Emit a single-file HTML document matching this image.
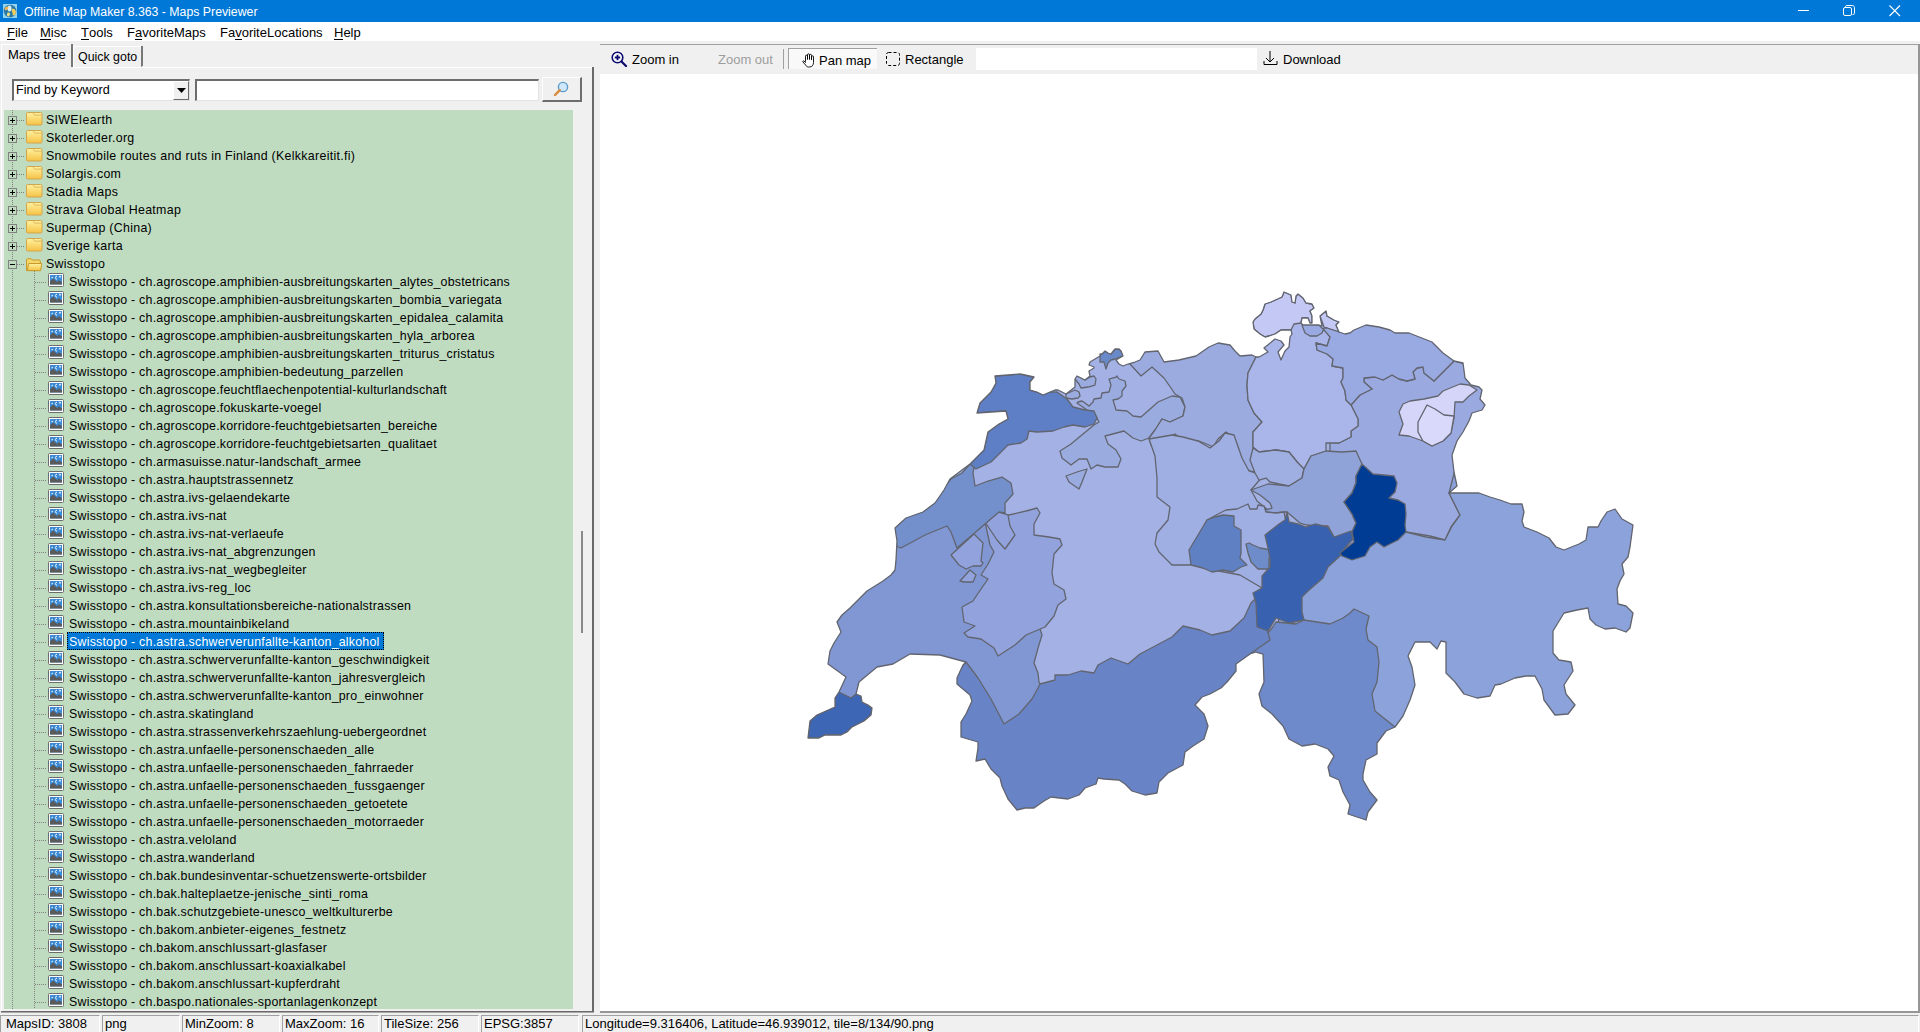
<!DOCTYPE html>
<html><head><meta charset="utf-8">
<style>
*{box-sizing:border-box;margin:0;padding:0}
html,body{width:1920px;height:1032px;overflow:hidden;background:#f0f0f0;font-family:"Liberation Sans",sans-serif;color:#000}
.a{position:absolute}
#title{left:0;top:0;width:1920px;height:22px;background:#0078d7}
#title .tx{left:24px;top:4px;font-size:12.3px;color:#fff;white-space:nowrap;line-height:16px}
#menu{left:0;top:22px;width:1920px;height:19px;background:#fff}
#menu span{position:absolute;top:3px;font-size:13px;line-height:16px;white-space:nowrap}
#menu u{text-decoration:none;border-bottom:1px solid #000;display:inline-block;line-height:12px}
.tab{position:absolute;font-size:13px;white-space:nowrap}
#tree{left:4px;top:110px;width:569px;height:899px;background:#c0dcc0;overflow:hidden}
.row{position:absolute;left:0;width:568px;height:18px}
.row .t{position:absolute;top:2px;font-size:12.4px;letter-spacing:0.3px;line-height:16px;white-space:nowrap;padding:0 2px 0 3px;height:18px}
.row .t.sel{background:#0078d7;color:#fff;outline:1px dotted #000;outline-offset:-1px;top:0;padding-top:2px;padding-right:4px}
.row .t.it{letter-spacing:0.22px;padding-left:2px}
.hd{position:absolute;top:10px;height:1px;background-image:linear-gradient(90deg,#808080 50%,transparent 50%);background-size:2px 1px}
.fi{position:absolute;left:22px;top:2px}
.mi{position:absolute;left:44px;top:1px}
.pb{position:absolute;left:4px;width:9px;height:9px;border:1px solid #808080;background:#c0dcc0;z-index:2}
.pb .h{position:absolute;left:1px;top:3px;width:5px;height:1px;background:#000}
.pb .v{position:absolute;left:3px;top:1px;width:1px;height:5px;background:#000}
.vd{position:absolute;width:1px;background-image:linear-gradient(180deg,#808080 50%,transparent 50%);background-size:1px 2px}
.tb{position:absolute;top:52px;font-size:13px;line-height:16px;white-space:nowrap}
.sp{position:absolute;top:1015px;height:17px;border-top:1px solid #a0a0a0;border-left:1px solid #a0a0a0;border-right:1px solid #fff;font-size:13px;line-height:16px;padding-left:5px;white-space:nowrap}
</style></head><body>
<div id="title" class="a">
  <svg class="a" style="left:3px;top:4px" width="14" height="14" viewBox="0 0 14 14"><rect width="14" height="14" fill="#93d3ee"/><circle cx="7" cy="7" r="6.3" fill="#2c7aa6"/><ellipse cx="6.5" cy="4.5" rx="2" ry="3" fill="#d8f0f2"/><path d="M1.5 5c.8-2 2.3-2.8 3.5-2.2.9.6.3 2.3-.9 3-1 .5-1.7 1-2.6-.8z" fill="#f0b45a"/><path d="M4 10c.5-1.6 2-1.8 2.8-.8.7 1-.2 2.8-1.3 3.3-1 .3-1.8-.9-1.5-2.5z" fill="#e9e08a"/><path d="M9 5c1.5-.8 3.5.2 3.8 2.2.3 2-.8 3.8-1.8 4.2-1 .3-1.5-1.2-1.5-2.5 0-1.3-1.6-2.9-.5-3.9z" fill="#f5cf5c"/></svg>
  <div class="a tx">Offline Map Maker 8.363 - Maps Previewer</div>
  <svg class="a" style="left:1798px;top:10px" width="11" height="1"><rect width="11" height="1" fill="#fff"/></svg>
  <svg class="a" style="left:1843px;top:5px" width="12" height="12" viewBox="0 0 12 12"><rect x="0.5" y="2.5" width="8" height="8" rx="1.5" fill="none" stroke="#fff"/><path d="M2.5 2.5V1.8c0-.8.5-1.3 1.3-1.3h5.5c1.2 0 2.2 1 2.2 2.2v5.5c0 .8-.5 1.3-1.3 1.3H9.5" fill="none" stroke="#fff"/></svg>
  <svg class="a" style="left:1889px;top:5px" width="12" height="12" viewBox="0 0 12 12"><path d="M0.5 0.5L11 11M11 0.5L0.5 11" stroke="#fff" stroke-width="1.1"/></svg>
</div>
<div id="menu" class="a">
  <span style="left:7px"><u>F</u>ile</span>
  <span style="left:40px"><u>M</u>isc</span>
  <span style="left:81px"><u>T</u>ools</span>
  <span style="left:127px">F<u>a</u>voriteMaps</span>
  <span style="left:220px">Fa<u>v</u>oriteLocations</span>
  <span style="left:334px"><u>H</u>elp</span>
</div>

<!-- tabs -->
<div class="a" style="left:73px;top:46px;width:69px;height:21px;border-left:1px solid #fff;border-top:1px solid #fff;border-right:1px solid #a0a0a0;"></div>
<div class="a" style="left:141px;top:46px;width:2px;height:20px;background:#777"></div>
<div class="tab" style="left:78px;top:50px;font-size:12.4px">Quick goto</div>
<div class="a" style="left:1px;top:44px;width:72px;height:24px;background:#f0f0f0;border-left:1px solid #fff;border-top:1px solid #fff;"></div>
<div class="a" style="left:71px;top:44px;width:2px;height:23px;background:#777"></div>
<div class="tab" style="left:8px;top:47px">Maps tree</div>
<!-- panel borders -->
<div class="a" style="left:1px;top:67px;width:1px;height:946px;background:#fff"></div>
<div class="a" style="left:73px;top:67px;width:521px;height:1px;background:#fff"></div>
<div class="a" style="left:592px;top:67px;width:2px;height:946px;background:#696969"></div>
<div class="a" style="left:1px;top:1011px;width:593px;height:1px;background:#6a6a6a"></div><div class="a" style="left:1px;top:1012px;width:593px;height:1px;background:#a8a8a8"></div>

<!-- combo -->
<div class="a" style="left:12px;top:79px;width:178px;height:22px;background:#fff;border-top:2px solid #6d6d6d;border-left:2px solid #6d6d6d;border-right:1px solid #e3e3e3;border-bottom:1px solid #e3e3e3"></div>
<div class="a" style="left:16px;top:82px;font-size:12.6px;line-height:16px;white-space:nowrap">Find by Keyword</div>
<div class="a" style="left:173px;top:81px;width:16px;height:19px;background:#f0f0f0;border-left:1px solid #fff;border-top:1px solid #fff;border-right:1px solid #696969;border-bottom:1px solid #696969"></div>
<svg class="a" style="left:177px;top:88px" width="9" height="5"><path d="M0 0h9L4.5 5z" fill="#000"/></svg>
<!-- text input -->
<div class="a" style="left:195px;top:79px;width:344px;height:22px;background:#fff;border-top:2px solid #6d6d6d;border-left:2px solid #6d6d6d;border-right:1px solid #e3e3e3;border-bottom:1px solid #e3e3e3"></div>
<!-- search button -->
<div class="a" style="left:542px;top:77px;width:40px;height:25px;background:#f0f0f0;border-left:1px solid #fff;border-top:1px solid #fff;border-right:2px solid #6d6d6d;border-bottom:2px solid #6d6d6d"></div>
<svg class="a" style="left:553px;top:81px" width="16" height="16" viewBox="0 0 16 16"><circle cx="10" cy="6" r="4.6" fill="#cfe8fb" stroke="#5a9ccc" stroke-width="1.4"/><path d="M6.8 9.2L2 14" stroke="#d98a3a" stroke-width="2.4" stroke-linecap="round"/></svg>

<svg width="0" height="0" style="position:absolute"><defs><linearGradient id="fgr" x1="0" y1="0" x2="0" y2="1"><stop offset="0" stop-color="#fff2a0"/><stop offset="1" stop-color="#f6c245"/></linearGradient></defs></svg>
<div id="tree" class="a">
<div class="vd" style="left:8px;top:0;height:899px"></div>
<div class="vd" style="left:30px;top:161px;height:739px"></div>
<div class="row" style="top:0px"><div class="hd" style="left:13px;width:8px"></div><svg class="fi" width="17" height="14" viewBox="0 0 17 14"><rect x="0.5" y="0.5" width="15.5" height="12.5" rx="1.2" fill="url(#fgr)" stroke="#d3a64e"/><path d="M7.2 0.8l1.3 2.3h7.3" fill="none" stroke="#d9b25a" stroke-width="0.9"/></svg><span class="t" style="left:39px">SIWEIearth</span></div>
<div class="pb" style="top:6px"><i class="h"></i><i class="v"></i></div>
<div class="row" style="top:18px"><div class="hd" style="left:13px;width:8px"></div><svg class="fi" width="17" height="14" viewBox="0 0 17 14"><rect x="0.5" y="0.5" width="15.5" height="12.5" rx="1.2" fill="url(#fgr)" stroke="#d3a64e"/><path d="M7.2 0.8l1.3 2.3h7.3" fill="none" stroke="#d9b25a" stroke-width="0.9"/></svg><span class="t" style="left:39px">Skoterleder.org</span></div>
<div class="pb" style="top:24px"><i class="h"></i><i class="v"></i></div>
<div class="row" style="top:36px"><div class="hd" style="left:13px;width:8px"></div><svg class="fi" width="17" height="14" viewBox="0 0 17 14"><rect x="0.5" y="0.5" width="15.5" height="12.5" rx="1.2" fill="url(#fgr)" stroke="#d3a64e"/><path d="M7.2 0.8l1.3 2.3h7.3" fill="none" stroke="#d9b25a" stroke-width="0.9"/></svg><span class="t" style="left:39px">Snowmobile routes and ruts in Finland (Kelkkareitit.fi)</span></div>
<div class="pb" style="top:42px"><i class="h"></i><i class="v"></i></div>
<div class="row" style="top:54px"><div class="hd" style="left:13px;width:8px"></div><svg class="fi" width="17" height="14" viewBox="0 0 17 14"><rect x="0.5" y="0.5" width="15.5" height="12.5" rx="1.2" fill="url(#fgr)" stroke="#d3a64e"/><path d="M7.2 0.8l1.3 2.3h7.3" fill="none" stroke="#d9b25a" stroke-width="0.9"/></svg><span class="t" style="left:39px">Solargis.com</span></div>
<div class="pb" style="top:60px"><i class="h"></i><i class="v"></i></div>
<div class="row" style="top:72px"><div class="hd" style="left:13px;width:8px"></div><svg class="fi" width="17" height="14" viewBox="0 0 17 14"><rect x="0.5" y="0.5" width="15.5" height="12.5" rx="1.2" fill="url(#fgr)" stroke="#d3a64e"/><path d="M7.2 0.8l1.3 2.3h7.3" fill="none" stroke="#d9b25a" stroke-width="0.9"/></svg><span class="t" style="left:39px">Stadia Maps</span></div>
<div class="pb" style="top:78px"><i class="h"></i><i class="v"></i></div>
<div class="row" style="top:90px"><div class="hd" style="left:13px;width:8px"></div><svg class="fi" width="17" height="14" viewBox="0 0 17 14"><rect x="0.5" y="0.5" width="15.5" height="12.5" rx="1.2" fill="url(#fgr)" stroke="#d3a64e"/><path d="M7.2 0.8l1.3 2.3h7.3" fill="none" stroke="#d9b25a" stroke-width="0.9"/></svg><span class="t" style="left:39px">Strava Global Heatmap</span></div>
<div class="pb" style="top:96px"><i class="h"></i><i class="v"></i></div>
<div class="row" style="top:108px"><div class="hd" style="left:13px;width:8px"></div><svg class="fi" width="17" height="14" viewBox="0 0 17 14"><rect x="0.5" y="0.5" width="15.5" height="12.5" rx="1.2" fill="url(#fgr)" stroke="#d3a64e"/><path d="M7.2 0.8l1.3 2.3h7.3" fill="none" stroke="#d9b25a" stroke-width="0.9"/></svg><span class="t" style="left:39px">Supermap (China)</span></div>
<div class="pb" style="top:114px"><i class="h"></i><i class="v"></i></div>
<div class="row" style="top:126px"><div class="hd" style="left:13px;width:8px"></div><svg class="fi" width="17" height="14" viewBox="0 0 17 14"><rect x="0.5" y="0.5" width="15.5" height="12.5" rx="1.2" fill="url(#fgr)" stroke="#d3a64e"/><path d="M7.2 0.8l1.3 2.3h7.3" fill="none" stroke="#d9b25a" stroke-width="0.9"/></svg><span class="t" style="left:39px">Sverige karta</span></div>
<div class="pb" style="top:132px"><i class="h"></i><i class="v"></i></div>
<div class="row" style="top:144px"><div class="hd" style="left:13px;width:8px"></div><svg class="fi" style="top:4px" width="17" height="14" viewBox="0 0 17 14"><path d="M0.5 12.5V2c0-.8.4-1.2 1.2-1.2h3.5l1 1.2h7c.7 0 1.1.4 1.1 1.1V12.5z" fill="#f7d768" stroke="#c69a2c"/><path d="M2.6 5.5h13.2l-1.2 7.2H1.3z" fill="url(#fgr)" stroke="#c69a2c"/></svg><span class="t" style="left:39px">Swisstopo</span></div>
<div class="pb" style="top:150px"><i class="h"></i></div>
<div class="row" style="top:162px"><div class="hd" style="left:31px;width:12px"></div><svg class="mi" width="16" height="14" viewBox="0 0 16 14"><rect x="0.5" y="0.5" width="15" height="13" rx="1" fill="#fff" stroke="#6c6c6c"/><rect x="2" y="2" width="12" height="9.5" fill="#3d8ad4"/><path d="M2 11.5V8.2l3.2-2.7 3.8 3.4 2-1.6 3 2.2v2z" fill="#5a5a5a"/><circle cx="4.2" cy="4.6" r="0.8" fill="#cfe8ff"/><path d="M9 3.2a1.5 1.5 0 1 0 0 3" stroke="#e8f4ff" fill="none" stroke-width="1"/><path d="M12 2.6v2.2M10.9 3.7h2.2" stroke="#e8f4ff" stroke-width="0.8"/></svg><span class="t it" style="left:63px">Swisstopo - ch.agroscope.amphibien-ausbreitungskarten_alytes_obstetricans</span></div>
<div class="row" style="top:180px"><div class="hd" style="left:31px;width:12px"></div><svg class="mi" width="16" height="14" viewBox="0 0 16 14"><rect x="0.5" y="0.5" width="15" height="13" rx="1" fill="#fff" stroke="#6c6c6c"/><rect x="2" y="2" width="12" height="9.5" fill="#3d8ad4"/><path d="M2 11.5V8.2l3.2-2.7 3.8 3.4 2-1.6 3 2.2v2z" fill="#5a5a5a"/><circle cx="4.2" cy="4.6" r="0.8" fill="#cfe8ff"/><path d="M9 3.2a1.5 1.5 0 1 0 0 3" stroke="#e8f4ff" fill="none" stroke-width="1"/><path d="M12 2.6v2.2M10.9 3.7h2.2" stroke="#e8f4ff" stroke-width="0.8"/></svg><span class="t it" style="left:63px">Swisstopo - ch.agroscope.amphibien-ausbreitungskarten_bombia_variegata</span></div>
<div class="row" style="top:198px"><div class="hd" style="left:31px;width:12px"></div><svg class="mi" width="16" height="14" viewBox="0 0 16 14"><rect x="0.5" y="0.5" width="15" height="13" rx="1" fill="#fff" stroke="#6c6c6c"/><rect x="2" y="2" width="12" height="9.5" fill="#3d8ad4"/><path d="M2 11.5V8.2l3.2-2.7 3.8 3.4 2-1.6 3 2.2v2z" fill="#5a5a5a"/><circle cx="4.2" cy="4.6" r="0.8" fill="#cfe8ff"/><path d="M9 3.2a1.5 1.5 0 1 0 0 3" stroke="#e8f4ff" fill="none" stroke-width="1"/><path d="M12 2.6v2.2M10.9 3.7h2.2" stroke="#e8f4ff" stroke-width="0.8"/></svg><span class="t it" style="left:63px">Swisstopo - ch.agroscope.amphibien-ausbreitungskarten_epidalea_calamita</span></div>
<div class="row" style="top:216px"><div class="hd" style="left:31px;width:12px"></div><svg class="mi" width="16" height="14" viewBox="0 0 16 14"><rect x="0.5" y="0.5" width="15" height="13" rx="1" fill="#fff" stroke="#6c6c6c"/><rect x="2" y="2" width="12" height="9.5" fill="#3d8ad4"/><path d="M2 11.5V8.2l3.2-2.7 3.8 3.4 2-1.6 3 2.2v2z" fill="#5a5a5a"/><circle cx="4.2" cy="4.6" r="0.8" fill="#cfe8ff"/><path d="M9 3.2a1.5 1.5 0 1 0 0 3" stroke="#e8f4ff" fill="none" stroke-width="1"/><path d="M12 2.6v2.2M10.9 3.7h2.2" stroke="#e8f4ff" stroke-width="0.8"/></svg><span class="t it" style="left:63px">Swisstopo - ch.agroscope.amphibien-ausbreitungskarten_hyla_arborea</span></div>
<div class="row" style="top:234px"><div class="hd" style="left:31px;width:12px"></div><svg class="mi" width="16" height="14" viewBox="0 0 16 14"><rect x="0.5" y="0.5" width="15" height="13" rx="1" fill="#fff" stroke="#6c6c6c"/><rect x="2" y="2" width="12" height="9.5" fill="#3d8ad4"/><path d="M2 11.5V8.2l3.2-2.7 3.8 3.4 2-1.6 3 2.2v2z" fill="#5a5a5a"/><circle cx="4.2" cy="4.6" r="0.8" fill="#cfe8ff"/><path d="M9 3.2a1.5 1.5 0 1 0 0 3" stroke="#e8f4ff" fill="none" stroke-width="1"/><path d="M12 2.6v2.2M10.9 3.7h2.2" stroke="#e8f4ff" stroke-width="0.8"/></svg><span class="t it" style="left:63px">Swisstopo - ch.agroscope.amphibien-ausbreitungskarten_triturus_cristatus</span></div>
<div class="row" style="top:252px"><div class="hd" style="left:31px;width:12px"></div><svg class="mi" width="16" height="14" viewBox="0 0 16 14"><rect x="0.5" y="0.5" width="15" height="13" rx="1" fill="#fff" stroke="#6c6c6c"/><rect x="2" y="2" width="12" height="9.5" fill="#3d8ad4"/><path d="M2 11.5V8.2l3.2-2.7 3.8 3.4 2-1.6 3 2.2v2z" fill="#5a5a5a"/><circle cx="4.2" cy="4.6" r="0.8" fill="#cfe8ff"/><path d="M9 3.2a1.5 1.5 0 1 0 0 3" stroke="#e8f4ff" fill="none" stroke-width="1"/><path d="M12 2.6v2.2M10.9 3.7h2.2" stroke="#e8f4ff" stroke-width="0.8"/></svg><span class="t it" style="left:63px">Swisstopo - ch.agroscope.amphibien-bedeutung_parzellen</span></div>
<div class="row" style="top:270px"><div class="hd" style="left:31px;width:12px"></div><svg class="mi" width="16" height="14" viewBox="0 0 16 14"><rect x="0.5" y="0.5" width="15" height="13" rx="1" fill="#fff" stroke="#6c6c6c"/><rect x="2" y="2" width="12" height="9.5" fill="#3d8ad4"/><path d="M2 11.5V8.2l3.2-2.7 3.8 3.4 2-1.6 3 2.2v2z" fill="#5a5a5a"/><circle cx="4.2" cy="4.6" r="0.8" fill="#cfe8ff"/><path d="M9 3.2a1.5 1.5 0 1 0 0 3" stroke="#e8f4ff" fill="none" stroke-width="1"/><path d="M12 2.6v2.2M10.9 3.7h2.2" stroke="#e8f4ff" stroke-width="0.8"/></svg><span class="t it" style="left:63px">Swisstopo - ch.agroscope.feuchtflaechenpotential-kulturlandschaft</span></div>
<div class="row" style="top:288px"><div class="hd" style="left:31px;width:12px"></div><svg class="mi" width="16" height="14" viewBox="0 0 16 14"><rect x="0.5" y="0.5" width="15" height="13" rx="1" fill="#fff" stroke="#6c6c6c"/><rect x="2" y="2" width="12" height="9.5" fill="#3d8ad4"/><path d="M2 11.5V8.2l3.2-2.7 3.8 3.4 2-1.6 3 2.2v2z" fill="#5a5a5a"/><circle cx="4.2" cy="4.6" r="0.8" fill="#cfe8ff"/><path d="M9 3.2a1.5 1.5 0 1 0 0 3" stroke="#e8f4ff" fill="none" stroke-width="1"/><path d="M12 2.6v2.2M10.9 3.7h2.2" stroke="#e8f4ff" stroke-width="0.8"/></svg><span class="t it" style="left:63px">Swisstopo - ch.agroscope.fokuskarte-voegel</span></div>
<div class="row" style="top:306px"><div class="hd" style="left:31px;width:12px"></div><svg class="mi" width="16" height="14" viewBox="0 0 16 14"><rect x="0.5" y="0.5" width="15" height="13" rx="1" fill="#fff" stroke="#6c6c6c"/><rect x="2" y="2" width="12" height="9.5" fill="#3d8ad4"/><path d="M2 11.5V8.2l3.2-2.7 3.8 3.4 2-1.6 3 2.2v2z" fill="#5a5a5a"/><circle cx="4.2" cy="4.6" r="0.8" fill="#cfe8ff"/><path d="M9 3.2a1.5 1.5 0 1 0 0 3" stroke="#e8f4ff" fill="none" stroke-width="1"/><path d="M12 2.6v2.2M10.9 3.7h2.2" stroke="#e8f4ff" stroke-width="0.8"/></svg><span class="t it" style="left:63px">Swisstopo - ch.agroscope.korridore-feuchtgebietsarten_bereiche</span></div>
<div class="row" style="top:324px"><div class="hd" style="left:31px;width:12px"></div><svg class="mi" width="16" height="14" viewBox="0 0 16 14"><rect x="0.5" y="0.5" width="15" height="13" rx="1" fill="#fff" stroke="#6c6c6c"/><rect x="2" y="2" width="12" height="9.5" fill="#3d8ad4"/><path d="M2 11.5V8.2l3.2-2.7 3.8 3.4 2-1.6 3 2.2v2z" fill="#5a5a5a"/><circle cx="4.2" cy="4.6" r="0.8" fill="#cfe8ff"/><path d="M9 3.2a1.5 1.5 0 1 0 0 3" stroke="#e8f4ff" fill="none" stroke-width="1"/><path d="M12 2.6v2.2M10.9 3.7h2.2" stroke="#e8f4ff" stroke-width="0.8"/></svg><span class="t it" style="left:63px">Swisstopo - ch.agroscope.korridore-feuchtgebietsarten_qualitaet</span></div>
<div class="row" style="top:342px"><div class="hd" style="left:31px;width:12px"></div><svg class="mi" width="16" height="14" viewBox="0 0 16 14"><rect x="0.5" y="0.5" width="15" height="13" rx="1" fill="#fff" stroke="#6c6c6c"/><rect x="2" y="2" width="12" height="9.5" fill="#3d8ad4"/><path d="M2 11.5V8.2l3.2-2.7 3.8 3.4 2-1.6 3 2.2v2z" fill="#5a5a5a"/><circle cx="4.2" cy="4.6" r="0.8" fill="#cfe8ff"/><path d="M9 3.2a1.5 1.5 0 1 0 0 3" stroke="#e8f4ff" fill="none" stroke-width="1"/><path d="M12 2.6v2.2M10.9 3.7h2.2" stroke="#e8f4ff" stroke-width="0.8"/></svg><span class="t it" style="left:63px">Swisstopo - ch.armasuisse.natur-landschaft_armee</span></div>
<div class="row" style="top:360px"><div class="hd" style="left:31px;width:12px"></div><svg class="mi" width="16" height="14" viewBox="0 0 16 14"><rect x="0.5" y="0.5" width="15" height="13" rx="1" fill="#fff" stroke="#6c6c6c"/><rect x="2" y="2" width="12" height="9.5" fill="#3d8ad4"/><path d="M2 11.5V8.2l3.2-2.7 3.8 3.4 2-1.6 3 2.2v2z" fill="#5a5a5a"/><circle cx="4.2" cy="4.6" r="0.8" fill="#cfe8ff"/><path d="M9 3.2a1.5 1.5 0 1 0 0 3" stroke="#e8f4ff" fill="none" stroke-width="1"/><path d="M12 2.6v2.2M10.9 3.7h2.2" stroke="#e8f4ff" stroke-width="0.8"/></svg><span class="t it" style="left:63px">Swisstopo - ch.astra.hauptstrassennetz</span></div>
<div class="row" style="top:378px"><div class="hd" style="left:31px;width:12px"></div><svg class="mi" width="16" height="14" viewBox="0 0 16 14"><rect x="0.5" y="0.5" width="15" height="13" rx="1" fill="#fff" stroke="#6c6c6c"/><rect x="2" y="2" width="12" height="9.5" fill="#3d8ad4"/><path d="M2 11.5V8.2l3.2-2.7 3.8 3.4 2-1.6 3 2.2v2z" fill="#5a5a5a"/><circle cx="4.2" cy="4.6" r="0.8" fill="#cfe8ff"/><path d="M9 3.2a1.5 1.5 0 1 0 0 3" stroke="#e8f4ff" fill="none" stroke-width="1"/><path d="M12 2.6v2.2M10.9 3.7h2.2" stroke="#e8f4ff" stroke-width="0.8"/></svg><span class="t it" style="left:63px">Swisstopo - ch.astra.ivs-gelaendekarte</span></div>
<div class="row" style="top:396px"><div class="hd" style="left:31px;width:12px"></div><svg class="mi" width="16" height="14" viewBox="0 0 16 14"><rect x="0.5" y="0.5" width="15" height="13" rx="1" fill="#fff" stroke="#6c6c6c"/><rect x="2" y="2" width="12" height="9.5" fill="#3d8ad4"/><path d="M2 11.5V8.2l3.2-2.7 3.8 3.4 2-1.6 3 2.2v2z" fill="#5a5a5a"/><circle cx="4.2" cy="4.6" r="0.8" fill="#cfe8ff"/><path d="M9 3.2a1.5 1.5 0 1 0 0 3" stroke="#e8f4ff" fill="none" stroke-width="1"/><path d="M12 2.6v2.2M10.9 3.7h2.2" stroke="#e8f4ff" stroke-width="0.8"/></svg><span class="t it" style="left:63px">Swisstopo - ch.astra.ivs-nat</span></div>
<div class="row" style="top:414px"><div class="hd" style="left:31px;width:12px"></div><svg class="mi" width="16" height="14" viewBox="0 0 16 14"><rect x="0.5" y="0.5" width="15" height="13" rx="1" fill="#fff" stroke="#6c6c6c"/><rect x="2" y="2" width="12" height="9.5" fill="#3d8ad4"/><path d="M2 11.5V8.2l3.2-2.7 3.8 3.4 2-1.6 3 2.2v2z" fill="#5a5a5a"/><circle cx="4.2" cy="4.6" r="0.8" fill="#cfe8ff"/><path d="M9 3.2a1.5 1.5 0 1 0 0 3" stroke="#e8f4ff" fill="none" stroke-width="1"/><path d="M12 2.6v2.2M10.9 3.7h2.2" stroke="#e8f4ff" stroke-width="0.8"/></svg><span class="t it" style="left:63px">Swisstopo - ch.astra.ivs-nat-verlaeufe</span></div>
<div class="row" style="top:432px"><div class="hd" style="left:31px;width:12px"></div><svg class="mi" width="16" height="14" viewBox="0 0 16 14"><rect x="0.5" y="0.5" width="15" height="13" rx="1" fill="#fff" stroke="#6c6c6c"/><rect x="2" y="2" width="12" height="9.5" fill="#3d8ad4"/><path d="M2 11.5V8.2l3.2-2.7 3.8 3.4 2-1.6 3 2.2v2z" fill="#5a5a5a"/><circle cx="4.2" cy="4.6" r="0.8" fill="#cfe8ff"/><path d="M9 3.2a1.5 1.5 0 1 0 0 3" stroke="#e8f4ff" fill="none" stroke-width="1"/><path d="M12 2.6v2.2M10.9 3.7h2.2" stroke="#e8f4ff" stroke-width="0.8"/></svg><span class="t it" style="left:63px">Swisstopo - ch.astra.ivs-nat_abgrenzungen</span></div>
<div class="row" style="top:450px"><div class="hd" style="left:31px;width:12px"></div><svg class="mi" width="16" height="14" viewBox="0 0 16 14"><rect x="0.5" y="0.5" width="15" height="13" rx="1" fill="#fff" stroke="#6c6c6c"/><rect x="2" y="2" width="12" height="9.5" fill="#3d8ad4"/><path d="M2 11.5V8.2l3.2-2.7 3.8 3.4 2-1.6 3 2.2v2z" fill="#5a5a5a"/><circle cx="4.2" cy="4.6" r="0.8" fill="#cfe8ff"/><path d="M9 3.2a1.5 1.5 0 1 0 0 3" stroke="#e8f4ff" fill="none" stroke-width="1"/><path d="M12 2.6v2.2M10.9 3.7h2.2" stroke="#e8f4ff" stroke-width="0.8"/></svg><span class="t it" style="left:63px">Swisstopo - ch.astra.ivs-nat_wegbegleiter</span></div>
<div class="row" style="top:468px"><div class="hd" style="left:31px;width:12px"></div><svg class="mi" width="16" height="14" viewBox="0 0 16 14"><rect x="0.5" y="0.5" width="15" height="13" rx="1" fill="#fff" stroke="#6c6c6c"/><rect x="2" y="2" width="12" height="9.5" fill="#3d8ad4"/><path d="M2 11.5V8.2l3.2-2.7 3.8 3.4 2-1.6 3 2.2v2z" fill="#5a5a5a"/><circle cx="4.2" cy="4.6" r="0.8" fill="#cfe8ff"/><path d="M9 3.2a1.5 1.5 0 1 0 0 3" stroke="#e8f4ff" fill="none" stroke-width="1"/><path d="M12 2.6v2.2M10.9 3.7h2.2" stroke="#e8f4ff" stroke-width="0.8"/></svg><span class="t it" style="left:63px">Swisstopo - ch.astra.ivs-reg_loc</span></div>
<div class="row" style="top:486px"><div class="hd" style="left:31px;width:12px"></div><svg class="mi" width="16" height="14" viewBox="0 0 16 14"><rect x="0.5" y="0.5" width="15" height="13" rx="1" fill="#fff" stroke="#6c6c6c"/><rect x="2" y="2" width="12" height="9.5" fill="#3d8ad4"/><path d="M2 11.5V8.2l3.2-2.7 3.8 3.4 2-1.6 3 2.2v2z" fill="#5a5a5a"/><circle cx="4.2" cy="4.6" r="0.8" fill="#cfe8ff"/><path d="M9 3.2a1.5 1.5 0 1 0 0 3" stroke="#e8f4ff" fill="none" stroke-width="1"/><path d="M12 2.6v2.2M10.9 3.7h2.2" stroke="#e8f4ff" stroke-width="0.8"/></svg><span class="t it" style="left:63px">Swisstopo - ch.astra.konsultationsbereiche-nationalstrassen</span></div>
<div class="row" style="top:504px"><div class="hd" style="left:31px;width:12px"></div><svg class="mi" width="16" height="14" viewBox="0 0 16 14"><rect x="0.5" y="0.5" width="15" height="13" rx="1" fill="#fff" stroke="#6c6c6c"/><rect x="2" y="2" width="12" height="9.5" fill="#3d8ad4"/><path d="M2 11.5V8.2l3.2-2.7 3.8 3.4 2-1.6 3 2.2v2z" fill="#5a5a5a"/><circle cx="4.2" cy="4.6" r="0.8" fill="#cfe8ff"/><path d="M9 3.2a1.5 1.5 0 1 0 0 3" stroke="#e8f4ff" fill="none" stroke-width="1"/><path d="M12 2.6v2.2M10.9 3.7h2.2" stroke="#e8f4ff" stroke-width="0.8"/></svg><span class="t it" style="left:63px">Swisstopo - ch.astra.mountainbikeland</span></div>
<div class="row" style="top:522px"><div class="hd" style="left:31px;width:12px"></div><svg class="mi" width="16" height="14" viewBox="0 0 16 14"><rect x="0.5" y="0.5" width="15" height="13" rx="1" fill="#fff" stroke="#6c6c6c"/><rect x="2" y="2" width="12" height="9.5" fill="#3d8ad4"/><path d="M2 11.5V8.2l3.2-2.7 3.8 3.4 2-1.6 3 2.2v2z" fill="#5a5a5a"/><circle cx="4.2" cy="4.6" r="0.8" fill="#cfe8ff"/><path d="M9 3.2a1.5 1.5 0 1 0 0 3" stroke="#e8f4ff" fill="none" stroke-width="1"/><path d="M12 2.6v2.2M10.9 3.7h2.2" stroke="#e8f4ff" stroke-width="0.8"/></svg><span class="t it sel" style="left:63px">Swisstopo - ch.astra.schwerverunfallte-kanton_alkohol</span></div>
<div class="row" style="top:540px"><div class="hd" style="left:31px;width:12px"></div><svg class="mi" width="16" height="14" viewBox="0 0 16 14"><rect x="0.5" y="0.5" width="15" height="13" rx="1" fill="#fff" stroke="#6c6c6c"/><rect x="2" y="2" width="12" height="9.5" fill="#3d8ad4"/><path d="M2 11.5V8.2l3.2-2.7 3.8 3.4 2-1.6 3 2.2v2z" fill="#5a5a5a"/><circle cx="4.2" cy="4.6" r="0.8" fill="#cfe8ff"/><path d="M9 3.2a1.5 1.5 0 1 0 0 3" stroke="#e8f4ff" fill="none" stroke-width="1"/><path d="M12 2.6v2.2M10.9 3.7h2.2" stroke="#e8f4ff" stroke-width="0.8"/></svg><span class="t it" style="left:63px">Swisstopo - ch.astra.schwerverunfallte-kanton_geschwindigkeit</span></div>
<div class="row" style="top:558px"><div class="hd" style="left:31px;width:12px"></div><svg class="mi" width="16" height="14" viewBox="0 0 16 14"><rect x="0.5" y="0.5" width="15" height="13" rx="1" fill="#fff" stroke="#6c6c6c"/><rect x="2" y="2" width="12" height="9.5" fill="#3d8ad4"/><path d="M2 11.5V8.2l3.2-2.7 3.8 3.4 2-1.6 3 2.2v2z" fill="#5a5a5a"/><circle cx="4.2" cy="4.6" r="0.8" fill="#cfe8ff"/><path d="M9 3.2a1.5 1.5 0 1 0 0 3" stroke="#e8f4ff" fill="none" stroke-width="1"/><path d="M12 2.6v2.2M10.9 3.7h2.2" stroke="#e8f4ff" stroke-width="0.8"/></svg><span class="t it" style="left:63px">Swisstopo - ch.astra.schwerverunfallte-kanton_jahresvergleich</span></div>
<div class="row" style="top:576px"><div class="hd" style="left:31px;width:12px"></div><svg class="mi" width="16" height="14" viewBox="0 0 16 14"><rect x="0.5" y="0.5" width="15" height="13" rx="1" fill="#fff" stroke="#6c6c6c"/><rect x="2" y="2" width="12" height="9.5" fill="#3d8ad4"/><path d="M2 11.5V8.2l3.2-2.7 3.8 3.4 2-1.6 3 2.2v2z" fill="#5a5a5a"/><circle cx="4.2" cy="4.6" r="0.8" fill="#cfe8ff"/><path d="M9 3.2a1.5 1.5 0 1 0 0 3" stroke="#e8f4ff" fill="none" stroke-width="1"/><path d="M12 2.6v2.2M10.9 3.7h2.2" stroke="#e8f4ff" stroke-width="0.8"/></svg><span class="t it" style="left:63px">Swisstopo - ch.astra.schwerverunfallte-kanton_pro_einwohner</span></div>
<div class="row" style="top:594px"><div class="hd" style="left:31px;width:12px"></div><svg class="mi" width="16" height="14" viewBox="0 0 16 14"><rect x="0.5" y="0.5" width="15" height="13" rx="1" fill="#fff" stroke="#6c6c6c"/><rect x="2" y="2" width="12" height="9.5" fill="#3d8ad4"/><path d="M2 11.5V8.2l3.2-2.7 3.8 3.4 2-1.6 3 2.2v2z" fill="#5a5a5a"/><circle cx="4.2" cy="4.6" r="0.8" fill="#cfe8ff"/><path d="M9 3.2a1.5 1.5 0 1 0 0 3" stroke="#e8f4ff" fill="none" stroke-width="1"/><path d="M12 2.6v2.2M10.9 3.7h2.2" stroke="#e8f4ff" stroke-width="0.8"/></svg><span class="t it" style="left:63px">Swisstopo - ch.astra.skatingland</span></div>
<div class="row" style="top:612px"><div class="hd" style="left:31px;width:12px"></div><svg class="mi" width="16" height="14" viewBox="0 0 16 14"><rect x="0.5" y="0.5" width="15" height="13" rx="1" fill="#fff" stroke="#6c6c6c"/><rect x="2" y="2" width="12" height="9.5" fill="#3d8ad4"/><path d="M2 11.5V8.2l3.2-2.7 3.8 3.4 2-1.6 3 2.2v2z" fill="#5a5a5a"/><circle cx="4.2" cy="4.6" r="0.8" fill="#cfe8ff"/><path d="M9 3.2a1.5 1.5 0 1 0 0 3" stroke="#e8f4ff" fill="none" stroke-width="1"/><path d="M12 2.6v2.2M10.9 3.7h2.2" stroke="#e8f4ff" stroke-width="0.8"/></svg><span class="t it" style="left:63px">Swisstopo - ch.astra.strassenverkehrszaehlung-uebergeordnet</span></div>
<div class="row" style="top:630px"><div class="hd" style="left:31px;width:12px"></div><svg class="mi" width="16" height="14" viewBox="0 0 16 14"><rect x="0.5" y="0.5" width="15" height="13" rx="1" fill="#fff" stroke="#6c6c6c"/><rect x="2" y="2" width="12" height="9.5" fill="#3d8ad4"/><path d="M2 11.5V8.2l3.2-2.7 3.8 3.4 2-1.6 3 2.2v2z" fill="#5a5a5a"/><circle cx="4.2" cy="4.6" r="0.8" fill="#cfe8ff"/><path d="M9 3.2a1.5 1.5 0 1 0 0 3" stroke="#e8f4ff" fill="none" stroke-width="1"/><path d="M12 2.6v2.2M10.9 3.7h2.2" stroke="#e8f4ff" stroke-width="0.8"/></svg><span class="t it" style="left:63px">Swisstopo - ch.astra.unfaelle-personenschaeden_alle</span></div>
<div class="row" style="top:648px"><div class="hd" style="left:31px;width:12px"></div><svg class="mi" width="16" height="14" viewBox="0 0 16 14"><rect x="0.5" y="0.5" width="15" height="13" rx="1" fill="#fff" stroke="#6c6c6c"/><rect x="2" y="2" width="12" height="9.5" fill="#3d8ad4"/><path d="M2 11.5V8.2l3.2-2.7 3.8 3.4 2-1.6 3 2.2v2z" fill="#5a5a5a"/><circle cx="4.2" cy="4.6" r="0.8" fill="#cfe8ff"/><path d="M9 3.2a1.5 1.5 0 1 0 0 3" stroke="#e8f4ff" fill="none" stroke-width="1"/><path d="M12 2.6v2.2M10.9 3.7h2.2" stroke="#e8f4ff" stroke-width="0.8"/></svg><span class="t it" style="left:63px">Swisstopo - ch.astra.unfaelle-personenschaeden_fahrraeder</span></div>
<div class="row" style="top:666px"><div class="hd" style="left:31px;width:12px"></div><svg class="mi" width="16" height="14" viewBox="0 0 16 14"><rect x="0.5" y="0.5" width="15" height="13" rx="1" fill="#fff" stroke="#6c6c6c"/><rect x="2" y="2" width="12" height="9.5" fill="#3d8ad4"/><path d="M2 11.5V8.2l3.2-2.7 3.8 3.4 2-1.6 3 2.2v2z" fill="#5a5a5a"/><circle cx="4.2" cy="4.6" r="0.8" fill="#cfe8ff"/><path d="M9 3.2a1.5 1.5 0 1 0 0 3" stroke="#e8f4ff" fill="none" stroke-width="1"/><path d="M12 2.6v2.2M10.9 3.7h2.2" stroke="#e8f4ff" stroke-width="0.8"/></svg><span class="t it" style="left:63px">Swisstopo - ch.astra.unfaelle-personenschaeden_fussgaenger</span></div>
<div class="row" style="top:684px"><div class="hd" style="left:31px;width:12px"></div><svg class="mi" width="16" height="14" viewBox="0 0 16 14"><rect x="0.5" y="0.5" width="15" height="13" rx="1" fill="#fff" stroke="#6c6c6c"/><rect x="2" y="2" width="12" height="9.5" fill="#3d8ad4"/><path d="M2 11.5V8.2l3.2-2.7 3.8 3.4 2-1.6 3 2.2v2z" fill="#5a5a5a"/><circle cx="4.2" cy="4.6" r="0.8" fill="#cfe8ff"/><path d="M9 3.2a1.5 1.5 0 1 0 0 3" stroke="#e8f4ff" fill="none" stroke-width="1"/><path d="M12 2.6v2.2M10.9 3.7h2.2" stroke="#e8f4ff" stroke-width="0.8"/></svg><span class="t it" style="left:63px">Swisstopo - ch.astra.unfaelle-personenschaeden_getoetete</span></div>
<div class="row" style="top:702px"><div class="hd" style="left:31px;width:12px"></div><svg class="mi" width="16" height="14" viewBox="0 0 16 14"><rect x="0.5" y="0.5" width="15" height="13" rx="1" fill="#fff" stroke="#6c6c6c"/><rect x="2" y="2" width="12" height="9.5" fill="#3d8ad4"/><path d="M2 11.5V8.2l3.2-2.7 3.8 3.4 2-1.6 3 2.2v2z" fill="#5a5a5a"/><circle cx="4.2" cy="4.6" r="0.8" fill="#cfe8ff"/><path d="M9 3.2a1.5 1.5 0 1 0 0 3" stroke="#e8f4ff" fill="none" stroke-width="1"/><path d="M12 2.6v2.2M10.9 3.7h2.2" stroke="#e8f4ff" stroke-width="0.8"/></svg><span class="t it" style="left:63px">Swisstopo - ch.astra.unfaelle-personenschaeden_motorraeder</span></div>
<div class="row" style="top:720px"><div class="hd" style="left:31px;width:12px"></div><svg class="mi" width="16" height="14" viewBox="0 0 16 14"><rect x="0.5" y="0.5" width="15" height="13" rx="1" fill="#fff" stroke="#6c6c6c"/><rect x="2" y="2" width="12" height="9.5" fill="#3d8ad4"/><path d="M2 11.5V8.2l3.2-2.7 3.8 3.4 2-1.6 3 2.2v2z" fill="#5a5a5a"/><circle cx="4.2" cy="4.6" r="0.8" fill="#cfe8ff"/><path d="M9 3.2a1.5 1.5 0 1 0 0 3" stroke="#e8f4ff" fill="none" stroke-width="1"/><path d="M12 2.6v2.2M10.9 3.7h2.2" stroke="#e8f4ff" stroke-width="0.8"/></svg><span class="t it" style="left:63px">Swisstopo - ch.astra.veloland</span></div>
<div class="row" style="top:738px"><div class="hd" style="left:31px;width:12px"></div><svg class="mi" width="16" height="14" viewBox="0 0 16 14"><rect x="0.5" y="0.5" width="15" height="13" rx="1" fill="#fff" stroke="#6c6c6c"/><rect x="2" y="2" width="12" height="9.5" fill="#3d8ad4"/><path d="M2 11.5V8.2l3.2-2.7 3.8 3.4 2-1.6 3 2.2v2z" fill="#5a5a5a"/><circle cx="4.2" cy="4.6" r="0.8" fill="#cfe8ff"/><path d="M9 3.2a1.5 1.5 0 1 0 0 3" stroke="#e8f4ff" fill="none" stroke-width="1"/><path d="M12 2.6v2.2M10.9 3.7h2.2" stroke="#e8f4ff" stroke-width="0.8"/></svg><span class="t it" style="left:63px">Swisstopo - ch.astra.wanderland</span></div>
<div class="row" style="top:756px"><div class="hd" style="left:31px;width:12px"></div><svg class="mi" width="16" height="14" viewBox="0 0 16 14"><rect x="0.5" y="0.5" width="15" height="13" rx="1" fill="#fff" stroke="#6c6c6c"/><rect x="2" y="2" width="12" height="9.5" fill="#3d8ad4"/><path d="M2 11.5V8.2l3.2-2.7 3.8 3.4 2-1.6 3 2.2v2z" fill="#5a5a5a"/><circle cx="4.2" cy="4.6" r="0.8" fill="#cfe8ff"/><path d="M9 3.2a1.5 1.5 0 1 0 0 3" stroke="#e8f4ff" fill="none" stroke-width="1"/><path d="M12 2.6v2.2M10.9 3.7h2.2" stroke="#e8f4ff" stroke-width="0.8"/></svg><span class="t it" style="left:63px">Swisstopo - ch.bak.bundesinventar-schuetzenswerte-ortsbilder</span></div>
<div class="row" style="top:774px"><div class="hd" style="left:31px;width:12px"></div><svg class="mi" width="16" height="14" viewBox="0 0 16 14"><rect x="0.5" y="0.5" width="15" height="13" rx="1" fill="#fff" stroke="#6c6c6c"/><rect x="2" y="2" width="12" height="9.5" fill="#3d8ad4"/><path d="M2 11.5V8.2l3.2-2.7 3.8 3.4 2-1.6 3 2.2v2z" fill="#5a5a5a"/><circle cx="4.2" cy="4.6" r="0.8" fill="#cfe8ff"/><path d="M9 3.2a1.5 1.5 0 1 0 0 3" stroke="#e8f4ff" fill="none" stroke-width="1"/><path d="M12 2.6v2.2M10.9 3.7h2.2" stroke="#e8f4ff" stroke-width="0.8"/></svg><span class="t it" style="left:63px">Swisstopo - ch.bak.halteplaetze-jenische_sinti_roma</span></div>
<div class="row" style="top:792px"><div class="hd" style="left:31px;width:12px"></div><svg class="mi" width="16" height="14" viewBox="0 0 16 14"><rect x="0.5" y="0.5" width="15" height="13" rx="1" fill="#fff" stroke="#6c6c6c"/><rect x="2" y="2" width="12" height="9.5" fill="#3d8ad4"/><path d="M2 11.5V8.2l3.2-2.7 3.8 3.4 2-1.6 3 2.2v2z" fill="#5a5a5a"/><circle cx="4.2" cy="4.6" r="0.8" fill="#cfe8ff"/><path d="M9 3.2a1.5 1.5 0 1 0 0 3" stroke="#e8f4ff" fill="none" stroke-width="1"/><path d="M12 2.6v2.2M10.9 3.7h2.2" stroke="#e8f4ff" stroke-width="0.8"/></svg><span class="t it" style="left:63px">Swisstopo - ch.bak.schutzgebiete-unesco_weltkulturerbe</span></div>
<div class="row" style="top:810px"><div class="hd" style="left:31px;width:12px"></div><svg class="mi" width="16" height="14" viewBox="0 0 16 14"><rect x="0.5" y="0.5" width="15" height="13" rx="1" fill="#fff" stroke="#6c6c6c"/><rect x="2" y="2" width="12" height="9.5" fill="#3d8ad4"/><path d="M2 11.5V8.2l3.2-2.7 3.8 3.4 2-1.6 3 2.2v2z" fill="#5a5a5a"/><circle cx="4.2" cy="4.6" r="0.8" fill="#cfe8ff"/><path d="M9 3.2a1.5 1.5 0 1 0 0 3" stroke="#e8f4ff" fill="none" stroke-width="1"/><path d="M12 2.6v2.2M10.9 3.7h2.2" stroke="#e8f4ff" stroke-width="0.8"/></svg><span class="t it" style="left:63px">Swisstopo - ch.bakom.anbieter-eigenes_festnetz</span></div>
<div class="row" style="top:828px"><div class="hd" style="left:31px;width:12px"></div><svg class="mi" width="16" height="14" viewBox="0 0 16 14"><rect x="0.5" y="0.5" width="15" height="13" rx="1" fill="#fff" stroke="#6c6c6c"/><rect x="2" y="2" width="12" height="9.5" fill="#3d8ad4"/><path d="M2 11.5V8.2l3.2-2.7 3.8 3.4 2-1.6 3 2.2v2z" fill="#5a5a5a"/><circle cx="4.2" cy="4.6" r="0.8" fill="#cfe8ff"/><path d="M9 3.2a1.5 1.5 0 1 0 0 3" stroke="#e8f4ff" fill="none" stroke-width="1"/><path d="M12 2.6v2.2M10.9 3.7h2.2" stroke="#e8f4ff" stroke-width="0.8"/></svg><span class="t it" style="left:63px">Swisstopo - ch.bakom.anschlussart-glasfaser</span></div>
<div class="row" style="top:846px"><div class="hd" style="left:31px;width:12px"></div><svg class="mi" width="16" height="14" viewBox="0 0 16 14"><rect x="0.5" y="0.5" width="15" height="13" rx="1" fill="#fff" stroke="#6c6c6c"/><rect x="2" y="2" width="12" height="9.5" fill="#3d8ad4"/><path d="M2 11.5V8.2l3.2-2.7 3.8 3.4 2-1.6 3 2.2v2z" fill="#5a5a5a"/><circle cx="4.2" cy="4.6" r="0.8" fill="#cfe8ff"/><path d="M9 3.2a1.5 1.5 0 1 0 0 3" stroke="#e8f4ff" fill="none" stroke-width="1"/><path d="M12 2.6v2.2M10.9 3.7h2.2" stroke="#e8f4ff" stroke-width="0.8"/></svg><span class="t it" style="left:63px">Swisstopo - ch.bakom.anschlussart-koaxialkabel</span></div>
<div class="row" style="top:864px"><div class="hd" style="left:31px;width:12px"></div><svg class="mi" width="16" height="14" viewBox="0 0 16 14"><rect x="0.5" y="0.5" width="15" height="13" rx="1" fill="#fff" stroke="#6c6c6c"/><rect x="2" y="2" width="12" height="9.5" fill="#3d8ad4"/><path d="M2 11.5V8.2l3.2-2.7 3.8 3.4 2-1.6 3 2.2v2z" fill="#5a5a5a"/><circle cx="4.2" cy="4.6" r="0.8" fill="#cfe8ff"/><path d="M9 3.2a1.5 1.5 0 1 0 0 3" stroke="#e8f4ff" fill="none" stroke-width="1"/><path d="M12 2.6v2.2M10.9 3.7h2.2" stroke="#e8f4ff" stroke-width="0.8"/></svg><span class="t it" style="left:63px">Swisstopo - ch.bakom.anschlussart-kupferdraht</span></div>
<div class="row" style="top:882px"><div class="hd" style="left:31px;width:12px"></div><svg class="mi" width="16" height="14" viewBox="0 0 16 14"><rect x="0.5" y="0.5" width="15" height="13" rx="1" fill="#fff" stroke="#6c6c6c"/><rect x="2" y="2" width="12" height="9.5" fill="#3d8ad4"/><path d="M2 11.5V8.2l3.2-2.7 3.8 3.4 2-1.6 3 2.2v2z" fill="#5a5a5a"/><circle cx="4.2" cy="4.6" r="0.8" fill="#cfe8ff"/><path d="M9 3.2a1.5 1.5 0 1 0 0 3" stroke="#e8f4ff" fill="none" stroke-width="1"/><path d="M12 2.6v2.2M10.9 3.7h2.2" stroke="#e8f4ff" stroke-width="0.8"/></svg><span class="t it" style="left:63px">Swisstopo - ch.baspo.nationales-sportanlagenkonzept</span></div>
</div>
<!-- overlay scrollbar -->
<div class="a" style="left:581px;top:531px;width:2px;height:102px;background:#8a8a8a"></div>

<!-- right panel -->
<div class="a" style="left:600px;top:44px;width:1320px;height:1px;background:#a0a0a0"></div>
<div class="a" style="left:600px;top:74px;width:1319px;height:938px;background:#fff"></div>
<div class="a" style="left:1918px;top:44px;width:2px;height:969px;background:#969696"></div>
<div class="a" style="left:600px;top:1011px;width:1320px;height:2px;background:#969696"></div>
<!-- toolbar -->
<svg class="a" style="left:611px;top:51px" width="17" height="16" viewBox="0 0 17 16"><circle cx="6.5" cy="6.5" r="5.3" fill="#fff" stroke="#0a0a6e" stroke-width="1.6"/><path d="M6.5 3.8v5.4M3.8 6.5h5.4" stroke="#0a0a6e" stroke-width="1.8"/><path d="M10.5 10.5l4.5 4.5" stroke="#0a0a6e" stroke-width="2.2" stroke-linecap="round"/></svg>
<div class="tb" style="left:632px">Zoom in</div>
<div class="tb" style="left:718px;color:#9d9d9d">Zoom out</div>
<div class="a" style="left:783px;top:49px;width:1px;height:20px;background:#a0a0a0"></div>
<div class="a" style="left:788px;top:48px;width:89px;height:21px;background:#f9f9f9;border-left:1px solid #a0a0a0;border-top:1px solid #a0a0a0"></div>
<svg class="a" style="left:802px;top:53px" width="13" height="15" viewBox="0 0 13 15"><path d="M3.5 8.5V3.2a1 1 0 0 1 2 0V6.5V1.8a1 1 0 0 1 2 0V6.5V2.4a1 1 0 0 1 2 0V7V3.8a1 1 0 0 1 2 0V9.5c0 2.6-1.5 4.5-4 4.5H6.6c-1.5 0-2.3-.8-3-2L.9 8.9c-.4-.7.5-1.4 1.1-.9L3.5 9.5z" fill="#fff" stroke="#000" stroke-width="0.9" stroke-linejoin="round"/></svg>
<div class="tb" style="left:819px;top:53px">Pan map</div>
<svg class="a" style="left:886px;top:52px" width="14" height="14" viewBox="0 0 14 14"><rect x="0.5" y="0.5" width="13" height="13" rx="2" fill="none" stroke="#000" stroke-dasharray="3 2"/></svg>
<div class="tb" style="left:905px">Rectangle</div>
<div class="a" style="left:976px;top:48px;width:281px;height:22px;background:#fff"></div>
<svg class="a" style="left:1263px;top:50px" width="15" height="16" viewBox="0 0 15 16"><path d="M7 1v11M3 8l4 4 4-4M1 11v3.5h13V11" fill="none" stroke="#000" stroke-width="1"/></svg>
<div class="tb" style="left:1283px">Download</div>

<svg class="a" style="left:0;top:0" width="1920" height="1032" viewBox="0 0 1920 1032">
<defs><clipPath id="ch"><polygon points="808,738 810,721 817,715 826,711 835,707 835,698 839,692 846,677 828,664 830,651 834,643 841,632 837,622 842,615 850,608 867,591 883,581 891,575 895,570 896,560 897,541 895,528 906,518 923,512 935,503 944,490 950,479 970,464 984,450 988,432 999,424 1008,419 1006,411 991,412 977,413 980,403 991,392 996,383 995,376 1008,375 1020,374 1025,375 1034,377 1030,382 1030,390 1037,392 1043,395 1050,392 1055,390 1058,390 1066,394 1075,387 1075,379 1077,376 1085,380 1090,376 1089,371 1094,368 1094,367 1089,365 1090,362 1100,356 1100,354 1102,354 1105,351 1108,353 1111,354 1115,349 1119,349 1121,351 1123,356 1116,360 1119,364 1123,366 1128,364 1135,362 1140,360 1145,352 1158,351 1164,362 1179,360 1196,356 1209,347 1218,343 1230,345 1235,351 1240,356 1252,355 1256,357 1259,357 1268,352 1264,348 1269,344 1275,339 1281,341 1284,345 1278,352 1281,360 1285,351 1289,347 1290,337 1292,334 1291,330 1287,330 1281,330 1275,334 1269,336 1265,337 1260,334 1254,329 1253,322 1255,319 1261,314 1263,310 1265,304 1271,302 1282,297 1284,292 1291,295 1292,302 1295,303 1296,296 1298,294 1303,298 1306,303 1312,304 1314,308 1310,311 1312,316 1312,323 1310,323 1308,318 1302,318 1301,323 1303,325 1312,325 1319,325 1322,326 1320,316 1326,311 1327,316 1334,320 1339,322 1336,325 1339,332 1345,334 1350,333 1354,330 1366,325 1379,327 1390,330 1395,333 1409,333 1432,342 1443,353 1454,361 1463,363 1465,378 1471,385 1479,387 1482,390 1480,399 1485,405 1482,410 1472,413 1469,421 1463,432 1457,441 1452,455 1454,472 1457,486 1449,493 1462,493 1479,493 1490,497 1500,500 1511,504 1522,504 1524,512 1522,521 1524,527 1537,532 1549,538 1556,547 1564,550 1579,544 1586,540 1588,527 1598,527 1601,521 1607,512 1615,509 1622,519 1633,525 1630,547 1628,557 1622,564 1624,574 1620,581 1617,589 1618,604 1626,606 1633,613 1630,628 1626,632 1615,628 1605,629 1596,625 1590,619 1588,608 1577,610 1564,613 1553,631 1553,653 1559,660 1571,662 1573,671 1564,685 1566,694 1575,705 1568,714 1555,715 1544,700 1542,689 1535,676 1526,676 1515,678 1501,684 1495,685 1490,696 1477,698 1464,694 1455,682 1446,673 1446,642 1441,641 1437,649 1430,642 1415,642 1408,656 1412,667 1415,685 1410,700 1403,716 1395,727 1386,731 1377,743 1377,754 1366,760 1363,774 1363,780 1370,792 1377,800 1368,812 1366,820 1354,816 1348,814 1350,805 1343,792 1339,780 1330,776 1328,767 1334,756 1328,749 1315,744 1302,746 1289,739 1283,726 1272,714 1262,706 1259,694 1264,682 1263,654 1256,652 1250,654 1236,664 1236,671 1227,682 1221,688 1210,694 1202,697 1195,705 1204,714 1208,726 1204,739 1193,746 1185,752 1183,765 1168,773 1159,782 1157,793 1145,795 1132,791 1125,784 1119,780 1104,779 1098,778 1096,784 1085,788 1079,795 1068,799 1051,797 1044,801 1034,808 1025,808 1017,810 1008,799 1002,786 1000,778 991,769 985,759 976,761 978,748 978,742 961,737 961,722 966,714 972,701 970,695 957,684 957,678 963,665 966,662 940,655 910,654 893,664 877,667 859,682 856,694 861,696 862,702 868,705 872,708 871,715 864,721 852,727 847,732 841,735 825,735 819,738"/></clipPath></defs>
<polygon points="808,738 810,721 817,715 826,711 835,707 835,698 839,692 846,677 828,664 830,651 834,643 841,632 837,622 842,615 850,608 867,591 883,581 891,575 895,570 896,560 897,541 895,528 906,518 923,512 935,503 944,490 950,479 970,464 984,450 988,432 999,424 1008,419 1006,411 991,412 977,413 980,403 991,392 996,383 995,376 1008,375 1020,374 1025,375 1034,377 1030,382 1030,390 1037,392 1043,395 1050,392 1055,390 1058,390 1066,394 1075,387 1075,379 1077,376 1085,380 1090,376 1089,371 1094,368 1094,367 1089,365 1090,362 1100,356 1100,354 1102,354 1105,351 1108,353 1111,354 1115,349 1119,349 1121,351 1123,356 1116,360 1119,364 1123,366 1128,364 1135,362 1140,360 1145,352 1158,351 1164,362 1179,360 1196,356 1209,347 1218,343 1230,345 1235,351 1240,356 1252,355 1256,357 1259,357 1268,352 1264,348 1269,344 1275,339 1281,341 1284,345 1278,352 1281,360 1285,351 1289,347 1290,337 1292,334 1291,330 1287,330 1281,330 1275,334 1269,336 1265,337 1260,334 1254,329 1253,322 1255,319 1261,314 1263,310 1265,304 1271,302 1282,297 1284,292 1291,295 1292,302 1295,303 1296,296 1298,294 1303,298 1306,303 1312,304 1314,308 1310,311 1312,316 1312,323 1310,323 1308,318 1302,318 1301,323 1303,325 1312,325 1319,325 1322,326 1320,316 1326,311 1327,316 1334,320 1339,322 1336,325 1339,332 1345,334 1350,333 1354,330 1366,325 1379,327 1390,330 1395,333 1409,333 1432,342 1443,353 1454,361 1463,363 1465,378 1471,385 1479,387 1482,390 1480,399 1485,405 1482,410 1472,413 1469,421 1463,432 1457,441 1452,455 1454,472 1457,486 1449,493 1462,493 1479,493 1490,497 1500,500 1511,504 1522,504 1524,512 1522,521 1524,527 1537,532 1549,538 1556,547 1564,550 1579,544 1586,540 1588,527 1598,527 1601,521 1607,512 1615,509 1622,519 1633,525 1630,547 1628,557 1622,564 1624,574 1620,581 1617,589 1618,604 1626,606 1633,613 1630,628 1626,632 1615,628 1605,629 1596,625 1590,619 1588,608 1577,610 1564,613 1553,631 1553,653 1559,660 1571,662 1573,671 1564,685 1566,694 1575,705 1568,714 1555,715 1544,700 1542,689 1535,676 1526,676 1515,678 1501,684 1495,685 1490,696 1477,698 1464,694 1455,682 1446,673 1446,642 1441,641 1437,649 1430,642 1415,642 1408,656 1412,667 1415,685 1410,700 1403,716 1395,727 1386,731 1377,743 1377,754 1366,760 1363,774 1363,780 1370,792 1377,800 1368,812 1366,820 1354,816 1348,814 1350,805 1343,792 1339,780 1330,776 1328,767 1334,756 1328,749 1315,744 1302,746 1289,739 1283,726 1272,714 1262,706 1259,694 1264,682 1263,654 1256,652 1250,654 1236,664 1236,671 1227,682 1221,688 1210,694 1202,697 1195,705 1204,714 1208,726 1204,739 1193,746 1185,752 1183,765 1168,773 1159,782 1157,793 1145,795 1132,791 1125,784 1119,780 1104,779 1098,778 1096,784 1085,788 1079,795 1068,799 1051,797 1044,801 1034,808 1025,808 1017,810 1008,799 1002,786 1000,778 991,769 985,759 976,761 978,748 978,742 961,737 961,722 966,714 972,701 970,695 957,684 957,678 963,665 966,662 940,655 910,654 893,664 877,667 859,682 856,694 861,696 862,702 868,705 872,708 871,715 864,721 852,727 847,732 841,735 825,735 819,738" fill="#a3b1e5"/>
<g clip-path="url(#ch)" stroke="#62656f" stroke-width="1.3" stroke-linejoin="round">
<polygon points="1060,451 1071,444 1083,434 1094,425 1099,422 1096,416 1087,410 1077,403 1078,402 1082,401 1085,403 1089,406 1093,402 1094,399 1101,398 1102,393 1109,392 1111,385 1109,379 1116,377 1117,376 1119,379 1125,381 1126,386 1122,391 1122,396 1118,399 1113,400 1116,410 1127,411 1133,416 1141,417 1149,410 1158,402 1172,396 1180,397 1185,407 1183,416 1170,422 1162,419 1155,430 1149,438 1141,441 1133,438 1124,431 1105,436 1108,444 1116,450 1121,459 1118,467 1105,467 1097,465 1091,469 1087,459 1079,459 1071,465 1062,458" fill="#9aacdf"/>
<polygon points="1075,377 1077,376 1085,380 1090,377 1094,376 1096,379 1095,385 1088,387 1081,388 1079,384 1075,379" fill="#9aacdf"/>
<polygon points="1066,394 1075,390 1079,392 1080,396 1078,398 1072,399 1066,398" fill="#9aacdf"/>
<polygon points="1066,476 1077,472 1087,469 1082,482 1079,489 1069,482" fill="#9aacdf"/>
<polygon points="1130,364 1130,330 1256,330 1256,357 1248,373 1247,385 1248,400 1254,413 1262,422 1253,432 1253,447 1256,466 1254,472 1245,469 1239,456 1233,437 1226,432 1218,439 1213,447 1209,445 1199,441 1184,441 1175,434 1167,439 1151,445 1149,438 1155,430 1162,419 1170,422 1183,416 1185,407 1182,398 1175,394 1171,388 1164,378 1152,367 1141,376" fill="#9babe0"/>
<polygon points="1330,442 1339,443 1351,437 1351,431 1358,426 1358,419 1351,405 1360,395 1372,389 1364,382 1364,378 1375,377 1383,380 1392,375 1399,379 1407,381 1415,379 1413,372 1417,368 1423,367 1424,373 1434,381 1454,361 1520,380 1470,500 1449,493 1460,515 1451,527 1445,540 1430,536 1406,532 1380,520 1345,480 1330,460" fill="#9aaae0"/>
<polygon points="1149,439 1155,456 1157,478 1157,497 1170,507 1168,520 1157,533 1155,544 1159,552 1172,565 1189,565 1240,555 1262,545 1268,510 1257,501 1251,490 1268,470 1255,473 1249,471 1242,458 1234,435 1225,433 1219,441 1210,448 1198,441 1183,437 1172,435" fill="#9faee3"/>
<polygon points="1256,357 1256,300 1330,300 1330,337 1327,346 1316,343 1317,350 1327,354 1333,359 1332,366 1343,368 1343,378 1341,382 1345,391 1346,400 1351,405 1358,419 1358,426 1351,431 1351,437 1339,443 1326,443 1326,451 1311,456 1304,469 1298,463 1289,452 1276,450 1259,452 1253,447 1253,432 1262,422 1254,413 1248,400 1247,385 1248,373" fill="#aab6e9"/>
<polygon points="1253,322 1254,329 1260,334 1265,337 1269,336 1275,334 1281,330 1287,330 1291,330 1294,324 1301,323 1302,318 1308,318 1310,323 1312,323 1312,316 1310,311 1314,308 1312,304 1306,303 1303,298 1298,294 1296,296 1295,303 1292,302 1291,295 1284,292 1282,297 1271,302 1265,304 1263,310 1261,314 1255,319" fill="#c4c8f5"/>
<polygon points="1320,316 1326,311 1327,316 1334,320 1339,322 1336,325 1339,332 1327,328 1324,327" fill="#c4c8f5"/>
<polygon points="1302,325 1305,333 1310,336 1317,336 1322,333 1324,328 1327,328 1339,332 1350,300 1500,300 1454,361 1434,381 1424,373 1423,367 1417,368 1413,372 1415,379 1407,381 1399,379 1392,375 1383,380 1375,377 1364,378 1364,382 1372,389 1360,395 1351,405 1346,400 1345,391 1341,382 1343,378 1343,368 1332,366 1333,359 1327,354 1317,350 1316,343 1327,346 1330,337 1324,330 1319,325 1312,324 1305,323" fill="#99a9e2"/>
<polygon points="1399,412 1403,404 1410,401 1424,399 1438,396 1443,391 1460,384 1469,385 1477,390 1469,396 1463,402 1455,402 1454,418 1451,433 1443,441 1432,446 1423,441 1409,436 1399,435 1403,424 1401,418" fill="#d5d5f9"/>
<polygon points="1418,422 1427,405 1435,409 1444,415 1454,416 1451,433 1443,441 1432,446 1423,441 1418,432" fill="#d9d9fb"/>
<polygon points="1449,493 1455,470 1660,470 1660,740 1390,790 1275,640 1290,560 1380,520 1406,532 1426,537 1445,540 1452,526 1460,515" fill="#8ca2da"/>
<polygon points="1250,654 1251,645 1268,633 1272,628 1276,622 1296,624 1304,620 1317,622 1330,624 1343,618 1350,613 1354,609 1369,616 1366,629 1368,640 1377,647 1379,662 1377,682 1372,694 1375,711 1395,727 1420,860 1230,860 1240,660" fill="#6e8aca"/>
<polygon points="780,560 800,450 950,500 975,515 985,522 1030,560 1030,560 1045,610 1049,620 1040,629 1042,635 1038,648 1034,663 1038,673 1039,682 1040,684 1100,720 1000,850 780,850" fill="#8097d3"/>
<polygon points="966,662 978,678 991,699 1004,724 1019,714 1032,699 1038,688 1040,684 1055,680 1055,675 1068,675 1081,671 1094,673 1098,665 1111,658 1128,664 1140,654 1172,637 1183,626 1200,630 1212,635 1230,631 1244,618 1251,603 1255,599 1262,610 1270,640 1250,654 1240,700 1150,860 940,860 930,700" fill="#6884c6"/>
<polygon points="808,738 810,721 817,715 826,711 835,707 835,698 839,692 851,698 856,694 861,696 862,702 868,705 872,708 871,715 864,721 852,727 847,732 841,735 825,735 819,738" fill="#3d66b4"/>
<polygon points="985,522 1002,513 1009,515 1026,511 1037,508 1040,513 1034,524 1034,535 1049,537 1060,539 1062,545 1054,554 1052,573 1054,584 1064,590 1066,599 1058,605 1054,616 1045,627 1026,635 1015,645 998,656 994,648 981,639 968,637 964,633 975,626 964,622 962,607 973,601 979,592 988,579 981,575 988,564 994,552 990,545" fill="#91a2dc"/>
<polygon points="951,555 974,534 983,543 981,561 983,563 981,566 973,566 966,569 959,565" fill="#91a2dc"/>
<polygon points="979,529 985,522 997,540 1005,549 1010,542 1015,535 1010,526 1008,515 998,512" fill="#91a2dc"/>
<polygon points="960,581 970,570 976,575 973,582 964,582" fill="#91a2dc"/>
<polygon points="975,462 973,473 975,486 988,481 1002,477 1011,483 1013,494 1005,503 1005,513 999,512 957,548 951,532 947,526 925,535 901,548 880,540 890,500 943,488 951,479 962,473 970,464" fill="#7390cc"/>
<polygon points="970,464 984,450 988,432 999,424 1008,419 1006,411 991,412 977,413 980,403 991,392 996,383 995,376 1008,375 1020,374 1025,375 1034,377 1030,382 1030,390 1037,392 1043,395 1050,392 1057,392 1067,399 1073,407 1085,410 1094,411 1097,418 1094,424 1085,427 1073,425 1064,427 1053,431 1037,432 1029,431 1027,439 1021,443 1008,445 999,454 991,462 976,469" fill="#5e7fc6"/>
<polygon points="1100,354 1102,354 1105,351 1108,353 1111,354 1115,349 1119,349 1121,351 1124,356 1120,357 1115,359 1111,360 1108,363 1106,369 1104,362 1100,362" fill="#6a89c9"/>
<polygon points="1255,473 1259,480 1266,478 1270,482 1279,484 1289,486 1302,478 1304,469 1298,463 1289,452 1276,450 1259,452 1253,448 1250,460" fill="#9fafe1"/>
<polygon points="1251,490 1268,484 1289,486 1302,478 1304,469 1311,456 1326,451 1342,452 1356,451 1362,464 1356,476 1356,483 1352,493 1344,502 1352,514 1356,523 1352,532 1335,539 1328,526 1317,526 1307,525 1300,523 1287,512 1284,512 1276,513 1266,512 1265,510 1272,508 1270,503 1260,495" fill="#8fa3d9"/>
<polygon points="1220,513 1226,510 1237,509 1248,504 1250,509 1257,509 1258,505 1264,506 1266,512 1276,513 1284,512 1290,540 1262,588 1240,575 1203,568 1200,534 1207,520" fill="#9faee3"/>
<polygon points="1189,550 1198,535 1207,520 1215,517 1223,515 1234,516 1234,526 1241,530 1241,553 1240,558 1247,565 1241,567 1233,572 1223,570 1212,572 1203,568 1191,565" fill="#5f80c3"/>
<polygon points="1246,544 1249,543 1253,545 1260,548 1271,550 1269,559 1269,569 1258,569 1251,562 1248,553" fill="#6e8cc9"/>
<polygon points="1287,512 1289,522 1298,524 1306,527 1315,524 1328,527 1334,537 1351,531 1353,539 1345,548 1340,556 1328,567 1323,578 1308,591 1302,597 1302,612 1304,620 1289,623 1276,618 1268,631 1257,627 1256,603 1253,593 1262,588 1262,576 1270,567 1270,559 1268,548 1265,535 1270,531 1279,524 1285,520" fill="#3862b0"/>
<polygon points="1362,464 1373,474 1394,476 1397,483 1395,492 1389,498 1398,500 1405,504 1406,514 1405,525 1406,532 1398,540 1384,547 1377,542 1370,547 1365,556 1352,560 1342,556 1340,553 1354,542 1352,532 1356,523 1352,514 1344,502 1352,493 1356,483 1356,476" fill="#003b94"/>
</g>
<polygon points="808,738 810,721 817,715 826,711 835,707 835,698 839,692 846,677 828,664 830,651 834,643 841,632 837,622 842,615 850,608 867,591 883,581 891,575 895,570 896,560 897,541 895,528 906,518 923,512 935,503 944,490 950,479 970,464 984,450 988,432 999,424 1008,419 1006,411 991,412 977,413 980,403 991,392 996,383 995,376 1008,375 1020,374 1025,375 1034,377 1030,382 1030,390 1037,392 1043,395 1050,392 1055,390 1058,390 1066,394 1075,387 1075,379 1077,376 1085,380 1090,376 1089,371 1094,368 1094,367 1089,365 1090,362 1100,356 1100,354 1102,354 1105,351 1108,353 1111,354 1115,349 1119,349 1121,351 1123,356 1116,360 1119,364 1123,366 1128,364 1135,362 1140,360 1145,352 1158,351 1164,362 1179,360 1196,356 1209,347 1218,343 1230,345 1235,351 1240,356 1252,355 1256,357 1259,357 1268,352 1264,348 1269,344 1275,339 1281,341 1284,345 1278,352 1281,360 1285,351 1289,347 1290,337 1292,334 1291,330 1287,330 1281,330 1275,334 1269,336 1265,337 1260,334 1254,329 1253,322 1255,319 1261,314 1263,310 1265,304 1271,302 1282,297 1284,292 1291,295 1292,302 1295,303 1296,296 1298,294 1303,298 1306,303 1312,304 1314,308 1310,311 1312,316 1312,323 1310,323 1308,318 1302,318 1301,323 1303,325 1312,325 1319,325 1322,326 1320,316 1326,311 1327,316 1334,320 1339,322 1336,325 1339,332 1345,334 1350,333 1354,330 1366,325 1379,327 1390,330 1395,333 1409,333 1432,342 1443,353 1454,361 1463,363 1465,378 1471,385 1479,387 1482,390 1480,399 1485,405 1482,410 1472,413 1469,421 1463,432 1457,441 1452,455 1454,472 1457,486 1449,493 1462,493 1479,493 1490,497 1500,500 1511,504 1522,504 1524,512 1522,521 1524,527 1537,532 1549,538 1556,547 1564,550 1579,544 1586,540 1588,527 1598,527 1601,521 1607,512 1615,509 1622,519 1633,525 1630,547 1628,557 1622,564 1624,574 1620,581 1617,589 1618,604 1626,606 1633,613 1630,628 1626,632 1615,628 1605,629 1596,625 1590,619 1588,608 1577,610 1564,613 1553,631 1553,653 1559,660 1571,662 1573,671 1564,685 1566,694 1575,705 1568,714 1555,715 1544,700 1542,689 1535,676 1526,676 1515,678 1501,684 1495,685 1490,696 1477,698 1464,694 1455,682 1446,673 1446,642 1441,641 1437,649 1430,642 1415,642 1408,656 1412,667 1415,685 1410,700 1403,716 1395,727 1386,731 1377,743 1377,754 1366,760 1363,774 1363,780 1370,792 1377,800 1368,812 1366,820 1354,816 1348,814 1350,805 1343,792 1339,780 1330,776 1328,767 1334,756 1328,749 1315,744 1302,746 1289,739 1283,726 1272,714 1262,706 1259,694 1264,682 1263,654 1256,652 1250,654 1236,664 1236,671 1227,682 1221,688 1210,694 1202,697 1195,705 1204,714 1208,726 1204,739 1193,746 1185,752 1183,765 1168,773 1159,782 1157,793 1145,795 1132,791 1125,784 1119,780 1104,779 1098,778 1096,784 1085,788 1079,795 1068,799 1051,797 1044,801 1034,808 1025,808 1017,810 1008,799 1002,786 1000,778 991,769 985,759 976,761 978,748 978,742 961,737 961,722 966,714 972,701 970,695 957,684 957,678 963,665 966,662 940,655 910,654 893,664 877,667 859,682 856,694 861,696 862,702 868,705 872,708 871,715 864,721 852,727 847,732 841,735 825,735 819,738" fill="none" stroke="#62656f" stroke-width="1.3" stroke-linejoin="round"/>
</svg>

<!-- status bar -->
<div class="a" style="left:0;top:1013px;width:1920px;height:19px;background:#f0f0f0"></div>
<div class="sp" style="left:0;width:100px">MapsID: 3808</div>
<div class="sp" style="left:102px;width:78px;padding-left:2px">png</div>
<div class="sp" style="left:182px;width:98px;padding-left:2px">MinZoom: 8</div>
<div class="sp" style="left:282px;width:97px;padding-left:2px">MaxZoom: 16</div>
<div class="sp" style="left:381px;width:98px;padding-left:2px">TileSize: 256</div>
<div class="sp" style="left:481px;width:98px;padding-left:2px">EPSG:3857</div>
<div class="sp" style="left:582px;width:1337px;padding-left:2px">Longitude=9.316406, Latitude=46.939012, tile=8/134/90.png</div>
</body></html>
